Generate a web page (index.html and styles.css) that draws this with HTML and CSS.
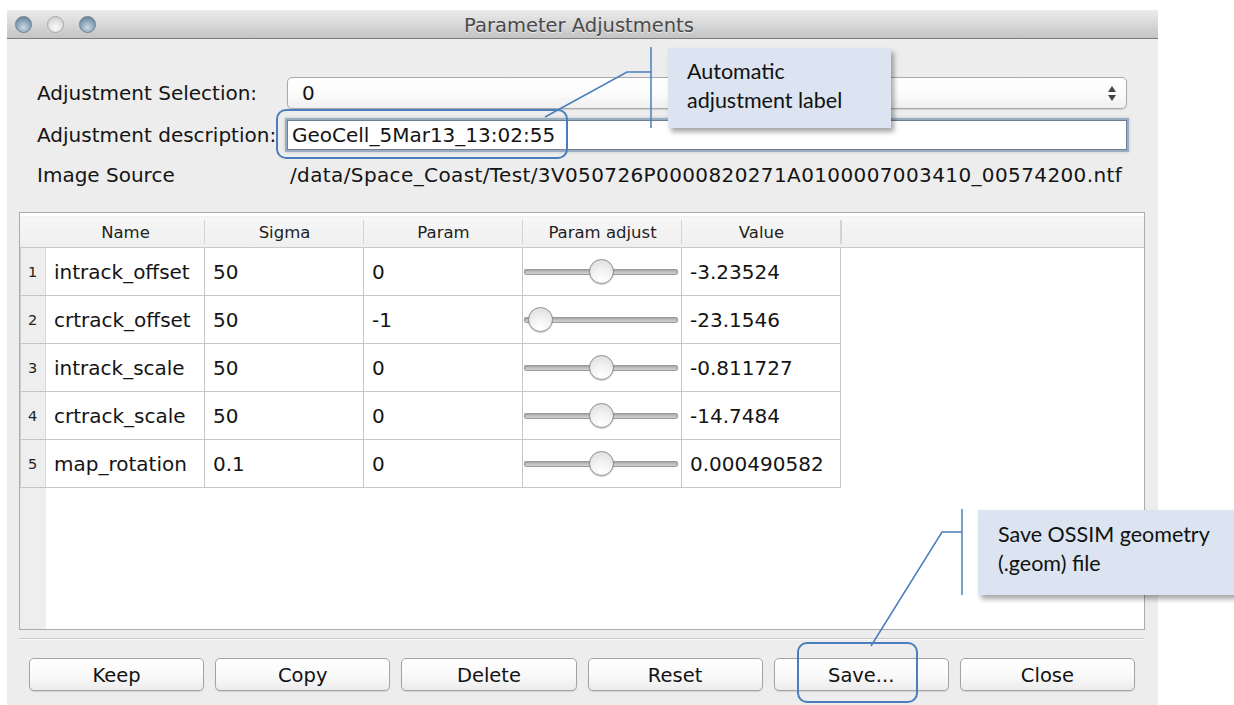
FILE: index.html
```html
<!DOCTYPE html>
<html lang="en">
<head>
<meta charset="utf-8">
<title>Parameter Adjustments</title>
<link rel="stylesheet" href="styles.css">
</head>
<body>
<div class="window">
  <div class="titlebar">
    <div class="lights">
      <span class="light light-blue"></span>
      <span class="light light-gray"></span>
      <span class="light light-blue"></span>
    </div>
    <div class="title">Parameter Adjustments</div>
  </div>

  <div class="content">
    <div class="form">
      <div class="label">Adjustment Selection:</div>
      <div class="select">
        <span class="select-value">0</span>
        <span class="stepper"><span class="tri-up"></span><span class="tri-down"></span></span>
      </div>

      <div class="label">Adjustment description:</div>
      <div class="input">GeoCell_5Mar13_13:02:55</div>

      <div class="label label-source">Image Source</div>
      <div class="path">/data/Space_Coast/Test/3V050726P0000820271A0100007003410_00574200.ntf</div>
    </div>

    <div class="table-panel">
      <div class="thead">
        <div class="th th-num"></div>
        <div class="th">Name</div>
        <div class="th">Sigma</div>
        <div class="th">Param</div>
        <div class="th">Param adjust</div>
        <div class="th">Value</div>
        <div class="th th-fill"></div>
      </div>
      <div class="tbody">
        <div class="tr">
          <div class="td td-num"><span>1</span></div>
          <div class="td">intrack_offset</div>
          <div class="td">50</div>
          <div class="td">0</div>
          <div class="td td-slider"><div class="track"><span class="knob knob-mid"></span></div></div>
          <div class="td">-3.23524</div>
        </div>
        <div class="tr">
          <div class="td td-num"><span>2</span></div>
          <div class="td">crtrack_offset</div>
          <div class="td">50</div>
          <div class="td">-1</div>
          <div class="td td-slider"><div class="track"><span class="knob knob-min"></span></div></div>
          <div class="td">-23.1546</div>
        </div>
        <div class="tr">
          <div class="td td-num"><span>3</span></div>
          <div class="td">intrack_scale</div>
          <div class="td">50</div>
          <div class="td">0</div>
          <div class="td td-slider"><div class="track"><span class="knob knob-mid"></span></div></div>
          <div class="td">-0.811727</div>
        </div>
        <div class="tr">
          <div class="td td-num"><span>4</span></div>
          <div class="td">crtrack_scale</div>
          <div class="td">50</div>
          <div class="td">0</div>
          <div class="td td-slider"><div class="track"><span class="knob knob-mid"></span></div></div>
          <div class="td">-14.7484</div>
        </div>
        <div class="tr">
          <div class="td td-num"><span>5</span></div>
          <div class="td">map_rotation</div>
          <div class="td">0.1</div>
          <div class="td">0</div>
          <div class="td td-slider"><div class="track"><span class="knob knob-mid"></span></div></div>
          <div class="td">0.000490582</div>
        </div>
      </div>
    </div>

    <div class="separator"></div>

    <div class="buttons">
      <button class="btn">Keep</button>
      <button class="btn">Copy</button>
      <button class="btn">Delete</button>
      <button class="btn">Reset</button>
      <button class="btn">Save...</button>
      <button class="btn">Close</button>
    </div>
  </div>
</div>

<!-- annotation layer: highlight rings and leader lines -->
<svg class="annotations" width="1234" height="705" viewBox="0 0 1234 705">
  <rect x="277" y="110" width="290" height="48" rx="9" ry="9" fill="none" stroke="#4a7ebb" stroke-width="2"/>
  <rect x="798" y="643" width="119" height="59" rx="9" ry="9" fill="none" stroke="#4a7ebb" stroke-width="2"/>
  <line x1="651" y1="47" x2="651" y2="128" stroke="#4a7ebb" stroke-width="1.5"/>
  <polyline points="651,72 627,72 545,117" fill="none" stroke="#4a7ebb" stroke-width="1.5"/>
  <line x1="962" y1="509" x2="962" y2="595" stroke="#4a7ebb" stroke-width="1.5"/>
  <polyline points="962,532 942,532 871,646" fill="none" stroke="#4a7ebb" stroke-width="1.5"/>
</svg>

<div class="callout callout-auto">Automatic<br>adjustment label</div>
<div class="callout callout-save">Save OSSIM geometry<br>(.geom) file</div>
</body>
</html>
```

FILE: styles.css
```css
html, body {
  margin: 0;
  padding: 0;
}

body {
  width: 1234px;
  height: 705px;
  background: #ffffff;
  position: relative;
  overflow: hidden;
  font-family: "DejaVu Sans", "Noto Sans", sans-serif;
  color: #141414;
}

/* ---------- window frame ---------- */
.window {
  margin: 10px 0 0 7px;
  width: 1151px;
  height: 695px;
  background: #ededed;
  display: flex;
  flex-direction: column;
}

.titlebar {
  height: 28px;
  flex: none;
  background: linear-gradient(#ececec, #d6d6d6 55%, #c4c4c4);
  border-bottom: 1px solid #7d7d7d;
  display: flex;
  align-items: center;
  position: relative;
}

.lights {
  display: flex;
  gap: 15px;
  padding-left: 8px;
}

.light {
  width: 17px;
  height: 17px;
  border-radius: 50%;
  box-sizing: border-box;
}

.light-blue {
  background: radial-gradient(circle at 50% 70%, #c8d8e6 0, #9fb5c8 35%, #6d879f 80%);
  border: 1px solid #6e7f8f;
}

.light-gray {
  background: radial-gradient(circle at 50% 70%, #fafafa 0, #e6e6e6 45%, #c9c9c9 90%);
  border: 1px solid #a8a8a8;
}

.title {
  flex: 1;
  text-align: center;
  font-size: 19.5px;
  color: #4a4a4a;
  text-shadow: 0 1px 0 rgba(255, 255, 255, 0.6);
  margin-right: 96px;
  margin-top: 2px;
}

.content {
  flex: 1;
  display: flex;
  flex-direction: column;
}

/* ---------- form ---------- */
.form {
  display: grid;
  grid-template-columns: 250px 1fr;
  grid-template-rows: 32px 30px 24px;
  row-gap: 11px;
  padding: 38px 31px 0 30px;
  align-items: center;
}

.label {
  font-size: 20px;
  white-space: nowrap;
}

.label-source {
  margin-top: 4px;
}

.select {
  height: 32px;
  box-sizing: border-box;
  border: 1px solid #a9a9a9;
  border-radius: 5px;
  background: linear-gradient(#ffffff, #fbfbfb 55%, #efefef);
  box-shadow: 0 1px 1px rgba(0, 0, 0, 0.12);
  display: flex;
  align-items: center;
  justify-content: space-between;
  padding: 0 10px 0 14px;
  font-size: 20px;
}

.stepper {
  display: flex;
  flex-direction: column;
  gap: 3px;
  align-items: center;
}

.tri-up {
  width: 0;
  height: 0;
  border-left: 4px solid transparent;
  border-right: 4px solid transparent;
  border-bottom: 6px solid #444;
}

.tri-down {
  width: 0;
  height: 0;
  border-left: 4px solid transparent;
  border-right: 4px solid transparent;
  border-top: 6px solid #444;
}

.input {
  height: 30px;
  box-sizing: border-box;
  background: #fff;
  border: 1px solid #6d8098;
  box-shadow: 0 0 0 2px #9aacbf, 0 0 3px 2px #b7c4d2;
  display: flex;
  align-items: center;
  padding-left: 4px;
  font-size: 20px;
}

.path {
  font-size: 20px;
  letter-spacing: 0.38px;
  padding-left: 3px;
  white-space: nowrap;
  margin-top: 4px;
}

/* ---------- parameter table ---------- */
.table-panel {
  margin: 27px 13px 0 12px;
  height: 418px;
  box-sizing: border-box;
  border: 1px solid #acacac;
  background: #ffffff;
  display: flex;
  flex-direction: column;
}

.thead {
  display: grid;
  grid-template-columns: 26px repeat(5, 159px) 1fr;
  height: 30px;
  margin-top: 3px;
  background: linear-gradient(#f7f7f7, #efefef);
  border-bottom: 1px solid #c9c9c9;
  border-top: 1px solid #f2f2f2;
  flex: none;
}

.th {
  font-size: 16.5px;
  color: #1e1e1e;
  display: flex;
  align-items: center;
  justify-content: center;
  position: relative;
}

.th + .th:not(.th-fill)::after,
.th-fill::before {
  content: "";
  position: absolute;
  right: 0;
  top: 3px;
  bottom: 3px;
  width: 1px;
  background: #d3d3d3;
}

.th-fill::before {
  left: 0;
  right: auto;
}

.th-num::after {
  display: none;
}

.tbody {
  flex: 1;
  background: linear-gradient(to right, #eeeeee 0, #eeeeee 26px, #ffffff 26px);
}

.tr {
  display: grid;
  grid-template-columns: 26px repeat(5, 159px);
  width: 821px;
  height: 48px;
  box-sizing: border-box;
  border-bottom: 1px solid #c6c6c6;
}

.td {
  font-size: 20px;
  display: flex;
  align-items: center;
  padding-left: 8px;
  border-right: 1px solid #c6c6c6;
  background: #ffffff;
  white-space: nowrap;
  overflow: hidden;
}

.td-num {
  background: #eeeeee;
  padding-left: 0;
  border-right: 1px solid #d8d8d8;
  justify-content: center;
  box-shadow: inset 1px 0 0 #cfcfcf;
}

.td-num span {
  font-size: 14.5px;
  color: #222222;
}

.td-slider {
  padding-left: 1px;
  padding-right: 3px;
}

.track {
  flex: 1;
  height: 6px;
  border-radius: 3px;
  background: linear-gradient(#9b9b9b, #c8c8c8 60%, #d8d8d8);
  box-shadow: inset 0 0 0 1px #9a9a9a;
  position: relative;
}

.knob {
  position: absolute;
  top: 50%;
  width: 25px;
  height: 25px;
  margin-top: -13px;
  border-radius: 50%;
  box-sizing: border-box;
  border: 1px solid #8e8e8e;
  background: radial-gradient(circle at 50% 85%, #ffffff 0, #f4f4f4 40%, #d9d9d9 100%);
  box-shadow: 0 1px 1px rgba(0, 0, 0, 0.2);
}

.knob-mid {
  left: 65px;
}

.knob-min {
  left: 4px;
}

/* ---------- footer ---------- */
.separator {
  margin: 8px 13px 0 12px;
  height: 1px;
  background: #c9c9c9;
  border-bottom: 1px solid #fafafa;
}

.buttons {
  display: grid;
  grid-template-columns: repeat(6, 1fr);
  column-gap: 11px;
  margin: 18px 23px 0 22px;
}

.btn {
  height: 33px;
  font-family: "DejaVu Sans", "Noto Sans", sans-serif;
  font-size: 19.5px;
  color: #121212;
  border: 1px solid #a4a4a4;
  border-radius: 5px;
  background: linear-gradient(#ffffff, #fafafa 50%, #ececec);
  box-shadow: 0 1px 1px rgba(0, 0, 0, 0.12);
  padding: 2px 0 0;
}

/* ---------- annotations ---------- */
.annotations {
  position: absolute;
  left: 0;
  top: 0;
  pointer-events: none;
}

.callout {
  position: absolute;
  background: #dbe4f0;
  font-family: "Lato", "Open Sans", sans-serif;
  font-size: 21.5px;
  line-height: 29px;
  color: #111111;
  box-shadow: 3px 4px 5px rgba(0, 0, 0, 0.35);
  box-sizing: border-box;
}

.callout-auto {
  left: 668px;
  top: 48px;
  width: 223px;
  height: 80px;
  padding: 9px 0 0 19px;
}

.callout-save {
  left: 978px;
  top: 510px;
  width: 262px;
  height: 85px;
  padding: 10px 0 0 20px;
}
```
